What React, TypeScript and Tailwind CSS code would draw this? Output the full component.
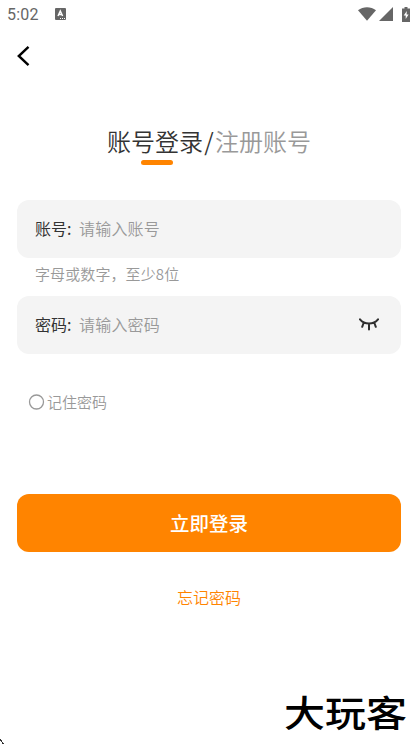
import { useState } from 'react';

function StatusBar() {
  return (
    <div className="flex h-7 items-center justify-between px-[7px] text-[#666666]">
      <div className="flex items-center">
        <span className="w-8 pt-px font-['Roboto'] text-base font-normal leading-7 tracking-[0.2px]">5:02</span>
        <svg width="11" height="12" viewBox="0 0 11 12" className="ml-4">
          <rect width="11" height="12" rx="1" fill="#666666" />
          <path d="M3 8 5.3 3 7.6 8M3.8 6.5h3" fill="none" stroke="#fff" strokeWidth="1.5" />
          <path d="M5 10.5h1M7 10.5h1M9 10.5h1" stroke="#fff" />
        </svg>
      </div>
      <div className="flex items-center">
        <svg width="18" height="14" viewBox="0 0 18 14">
          <path d="M0 3.2C5.2-.8 12.8-.8 18 3.2L9 13.8Z" fill="#666666" />
        </svg>
        <svg width="14" height="14" viewBox="0 0 14 14" className="ml-[3px]">
          <path d="M14 0v14H0Z" fill="#666666" />
        </svg>
        <svg width="8" height="15" viewBox="0 0 8 15" className="ml-[9px] mr-px">
          <path d="M2.5 0h3v1.5H8V15H0V1.5h2.5Z" fill="#666666" />
          <path d="M4.8 4 1.7 8.6h2V12l2.9-4.6h-2Z" fill="#fff" />
        </svg>
      </div>
    </div>
  );
}

function ClosedEye() {
  return (
    <svg width="20" height="13" viewBox="0 0 20 13" fill="none" stroke="#2f2f2f" strokeWidth="2" strokeLinecap="round">
      <path d="M1 1.4C5.4 7 14.6 7 19 1.4M10 6v5.4M4.6 5 3.2 8.8M15.4 5l1.4 3.8" />
    </svg>
  );
}

export default function LoginPage() {
  const [account, setAccount] = useState('');
  const [password, setPassword] = useState('');
  const [showPassword, setShowPassword] = useState(false);
  const [remember, setRemember] = useState(false);

  return (
    <div className="relative flex h-[744px] w-[418px] flex-col overflow-hidden bg-white font-['Noto_Sans_CJK_SC',sans-serif] font-[350] text-[#333333]">
      <StatusBar />

      <div className="flex h-14 items-center pl-[17px]">
        <button type="button" aria-label="返回">
          <svg width="13" height="20" viewBox="0 0 13 20" fill="none" stroke="#000" strokeWidth="2.4">
            <path d="M11.5 .9 1.8 10l9.7 9.1" />
          </svg>
        </button>
      </div>

      <div className="mt-[39px] flex h-9 items-center justify-center text-2xl leading-9">
        <span className="relative">
          账号登录
          <span className="absolute left-[34px] top-[37px] h-[5px] w-8 rounded-full bg-[#ff8400]" />
        </span>
        <span className="w-3 text-center">/</span>
        <span className="text-[#999999]">注册账号</span>
      </div>

      <form className="mt-[41px] flex flex-col px-[17px]" onSubmit={(e) => e.preventDefault()}>
        <label className="flex h-[58px] items-center rounded-xl bg-[#f4f4f4] px-[18px] pb-0.5 text-base">
          <span className="w-11 font-normal">账号:</span>
          <input
            className="min-w-0 flex-1 tracking-[0.2px] outline-none placeholder:text-[#999999]"
            placeholder="请输入账号"
            value={account}
            onChange={(e) => setAccount(e.target.value)}
          />
        </label>
        <p className="h-[38px] pl-[18px] text-[15px] leading-[31px] tracking-[0.1px] text-[#999999]">字母或数字，至少8位</p>
        <div className="flex h-[58px] items-center rounded-xl bg-[#f4f4f4] pb-0.5 pl-[18px] pr-[22px] text-base">
          <span className="w-11 font-normal">密码:</span>
          <input
            className="min-w-0 flex-1 tracking-[0.2px] outline-none placeholder:text-[#999999]"
            type={showPassword ? 'text' : 'password'}
            placeholder="请输入密码"
            value={password}
            onChange={(e) => setPassword(e.target.value)}
          />
          <button type="button" aria-label="显示密码" onClick={() => setShowPassword(!showPassword)}>
            <ClosedEye />
          </button>
        </div>

        <button
          type="button"
          className="mt-9 flex h-6 items-center gap-0.5 pl-[11px] text-[15px] text-[#999999]"
          onClick={() => setRemember(!remember)}
        >
          <svg width="17" height="17" viewBox="0 0 17 17" fill="none" stroke="#999999">
            <circle cx="8.5" cy="8" r="7" strokeWidth="1.3" />
            {remember && <circle cx="8.5" cy="8" r="4" fill="#ff8400" stroke="none" />}
          </svg>
          记住密码
        </button>

        <button type="submit" className="mt-20 h-[58px] rounded-xl bg-[#ff8400] pb-px text-[19.5px] font-medium text-white">
          立即登录
        </button>
        <button type="button" className="mt-[33px] self-center text-base text-[#ff8400]">
          忘记密码
        </button>
      </form>

      <div className="absolute left-[284px] top-[682px] origin-left scale-y-90 text-[41px] font-medium leading-[58px] text-black">
        大玩客
      </div>
      <svg width="4" height="5" viewBox="0 0 4 5" className="absolute bottom-0 left-0">
        <path d="M0 0v2h1v1h1v2h2V4H3V3H2V1H1V0Z" fill="#333333" />
      </svg>
    </div>
  );
}
